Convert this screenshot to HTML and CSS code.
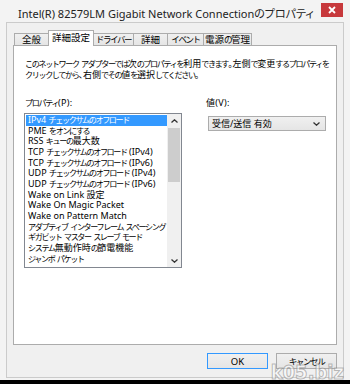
FILE: index.html
```html
<!DOCTYPE html>
<html lang="ja">
<head>
  <meta charset="UTF-8">
  <meta name="viewport" content="width=device-width, initial-scale=1.0">
  <title>Intel(R) 82579LM Gigabit Network Connectionのプロパティ</title>
  <link rel="stylesheet" href="styles.css">
</head>
<body>
  <div class="window">
    <div class="titlebar">
      <span class="title">Intel(R) 82579LM Gigabit Network Connectionのプロパティ</span>
      <div class="close">
        <svg width="8" height="8" viewBox="0 0 8 8"><path d="M1 1L7 7M7 1L1 7" stroke="#fff" stroke-width="1.8"/></svg>
      </div>
    </div>

    <div class="client" id="client">
      <div class="tabs">
        <div class="tab">全般</div>
        <div class="tab active">詳細設定</div>
        <div class="tab">ドライバー</div>
        <div class="tab">詳細</div>
        <div class="tab">イベント</div>
        <div class="tab">電源の管理</div>
      </div>

      <div class="panel">
        <p class="desc">このネットワーク アダプターでは次のプロパティを利用できます。左側で変更するプロパティを<br>クリックしてから、右側でその値を選択してください。</p>

        <div class="fields">
          <div class="field">
            <div class="label">プロパティ(P):</div>
            <div class="listbox">
              <div class="items" id="propList"></div>
              <div class="scrollbar">
                <div class="arrow">
                  <svg width="7" height="4" viewBox="0 0 7 4"><path d="M0.5 3.5L3.5 0.8L6.5 3.5" fill="none" stroke="#333" stroke-width="1.3"/></svg>
                </div>
                <div class="track"><div class="thumb"></div></div>
                <div class="arrow">
                  <svg width="7" height="4" viewBox="0 0 7 4"><path d="M0.5 0.5L3.5 3.2L6.5 0.5" fill="none" stroke="#333" stroke-width="1.3"/></svg>
                </div>
              </div>
            </div>
          </div>

          <div class="field value">
            <div class="label">値(V):</div>
            <div class="combo">
              <span>受信/送信 有効</span>
              <svg width="7" height="4" viewBox="0 0 7 4"><path d="M0.5 0.5L3.5 3.2L6.5 0.5" fill="none" stroke="#333" stroke-width="1.3"/></svg>
            </div>
          </div>
        </div>
      </div>

      <div class="buttons">
        <button class="btn default">OK</button>
        <button class="btn">キャンセル</button>
      </div>
    </div>

    <div class="watermark">k05.biz</div>
  </div>

  <script>
    const props = [
      "IPv4 チェックサムのオフロード",
      "PME をオンにする",
      "RSS キューの最大数",
      "TCP チェックサムのオフロード (IPv4)",
      "TCP チェックサムのオフロード (IPv6)",
      "UDP チェックサムのオフロード (IPv4)",
      "UDP チェックサムのオフロード (IPv6)",
      "Wake on Link 設定",
      "Wake On Magic Packet",
      "Wake on Pattern Match",
      "アダプティブ インターフレーム スペーシング",
      "ギガビット マスター スレーブ モード",
      "システム無動作時の節電機能",
      "ジャンボ パケット"
    ];

    const listEl = document.getElementById('propList');
    props.forEach((name, i) => {
      const row = document.createElement('div');
      row.className = i === 0 ? 'item selected' : 'item';
      row.textContent = name;
      listEl.appendChild(row);
    });

    // kana runs get their own span so they can sit narrow like the UI font
    function wrapKana(root) {
      const walker = document.createTreeWalker(root, NodeFilter.SHOW_TEXT);
      const nodes = [];
      while (walker.nextNode()) nodes.push(walker.currentNode);
      nodes.forEach(node => {
        if (!/[\u3040-\u30ff]/.test(node.nodeValue)) return;
        const tmp = document.createElement('span');
        tmp.innerHTML = node.nodeValue.replace(/[\u3040-\u30ff]+/g, m => `<span class="kana">${m}</span>`);
        node.replaceWith(...tmp.childNodes);
      });
    }

    wrapKana(document.getElementById('client'));
  </script>
</body>
</html>
```

FILE: styles.css
```css
html {
  background: #000;
}
body {
  margin: 0;
  font-family: "Noto Sans", "Noto Sans CJK JP", sans-serif;
  font-size: 9px;
  font-feature-settings: "palt";
  color: #000;
}
.kana {
  font-size: 0.9em;
  font-feature-settings: normal;
  letter-spacing: -0.17em;
}
.window {
  position: relative;
  width: 350px;
  height: 380px;
  box-sizing: border-box;
  padding: 0 6px 2px 6px;
  background: #f3f3f3;
  display: flex;
  flex-direction: column;
}
.titlebar {
  flex: none;
  height: 22px;
  display: flex;
  justify-content: space-between;
  align-items: flex-start;
}
.title {
  margin: 8px 0 0 12px;
  font-size: 11px;
  line-height: 12px;
  color: #222;
}
.close {
  margin: 3px 1px 0 0;
  width: 22px;
  height: 14px;
  background: #c7393c;
  display: flex;
  align-items: center;
  justify-content: center;
}
.client {
  flex: 1;
  border: 1px solid #cbcbcb;
  background: #f0f0f0;
  padding: 7px 6px 0 6px;
}
.tabs {
  display: flex;
  align-items: flex-end;
  height: 15px;
  padding-left: 1px;
  font-size: 9.5px;
}
.tab {
  position: relative;
  box-sizing: border-box;
  height: 12px;
  line-height: 11px;
  margin-right: -1px;
  border: 1px solid #acacac;
  border-bottom: none;
  background: linear-gradient(#f0f0f0, #e5e5e5);
  text-align: center;
  white-space: nowrap;
}
.tab:nth-child(1) { width: 35px; }
.tab:nth-child(3) { width: 41px; }
.tab:nth-child(4) { width: 35px; }
.tab:nth-child(5) { width: 37px; }
.tab:nth-child(6) { width: 49px; }
.tab.active {
  z-index: 1;
  width: 46px;
  height: 16px;
  line-height: 14px;
  margin-bottom: -1px;
  background: #fff;
}
.panel {
  height: 300px;
  box-sizing: border-box;
  border: 1px solid #acacac;
  background: #fff;
  padding: 13px 10px 0 11px;
}
.desc {
  margin: 0;
  line-height: 10.5px;
  white-space: nowrap;
}
.fields {
  display: flex;
  gap: 24px;
  margin-top: 18px;
}
.label {
  line-height: 10px;
  margin-bottom: 5px;
  letter-spacing: 0.3px;
}
.value .label {
  margin-bottom: 8px;
}
.listbox {
  width: 158px;
  height: 155px;
  margin-left: -1px;
  box-sizing: border-box;
  border: 1px solid #828790;
  display: flex;
}
.items {
  flex: 1;
  min-width: 0;
  padding: 1px 0 0 1px;
  overflow: hidden;
}
.item {
  height: 10.67px;
  line-height: 10.67px;
  padding-left: 2px;
  white-space: nowrap;
}
.item.selected {
  background: #3399ff;
  color: #fff;
}
.scrollbar {
  flex: none;
  width: 14px;
  background: #f0f0f0;
  display: flex;
  flex-direction: column;
}
.arrow {
  height: 13px;
  display: flex;
  align-items: center;
  justify-content: center;
}
.track {
  flex: 1;
  padding: 1px 1px 0 1px;
}
.thumb {
  height: 54px;
  background: #cdcdcd;
}
.combo {
  width: 118px;
  height: 15px;
  margin-left: 2px;
  box-sizing: border-box;
  border: 1px solid #acacac;
  background: linear-gradient(#f0f0f0, #e5e5e5);
  display: flex;
  align-items: center;
  justify-content: space-between;
  padding: 0 5px 0 3px;
}
.buttons {
  display: flex;
  justify-content: flex-end;
  gap: 8px;
  margin-top: 8px;
}
.btn {
  width: 61px;
  height: 16px;
  padding: 0;
  font: inherit;
  font-size: 9.5px;
  color: #000;
  border: 1px solid #acacac;
  background: linear-gradient(#f0f0f0, #e5e5e5);
}
.btn.default {
  border-color: #3399ff;
}
.watermark {
  position: absolute;
  right: 6px;
  bottom: -2px;
  font-family: "DejaVu Sans Condensed", "DejaVu Sans", sans-serif;
  font-weight: bold;
  font-size: 20px;
  line-height: 20px;
  color: rgba(255, 255, 255, 0.5);
  -webkit-text-stroke: 1px rgba(130, 130, 130, 0.55);
}
```
